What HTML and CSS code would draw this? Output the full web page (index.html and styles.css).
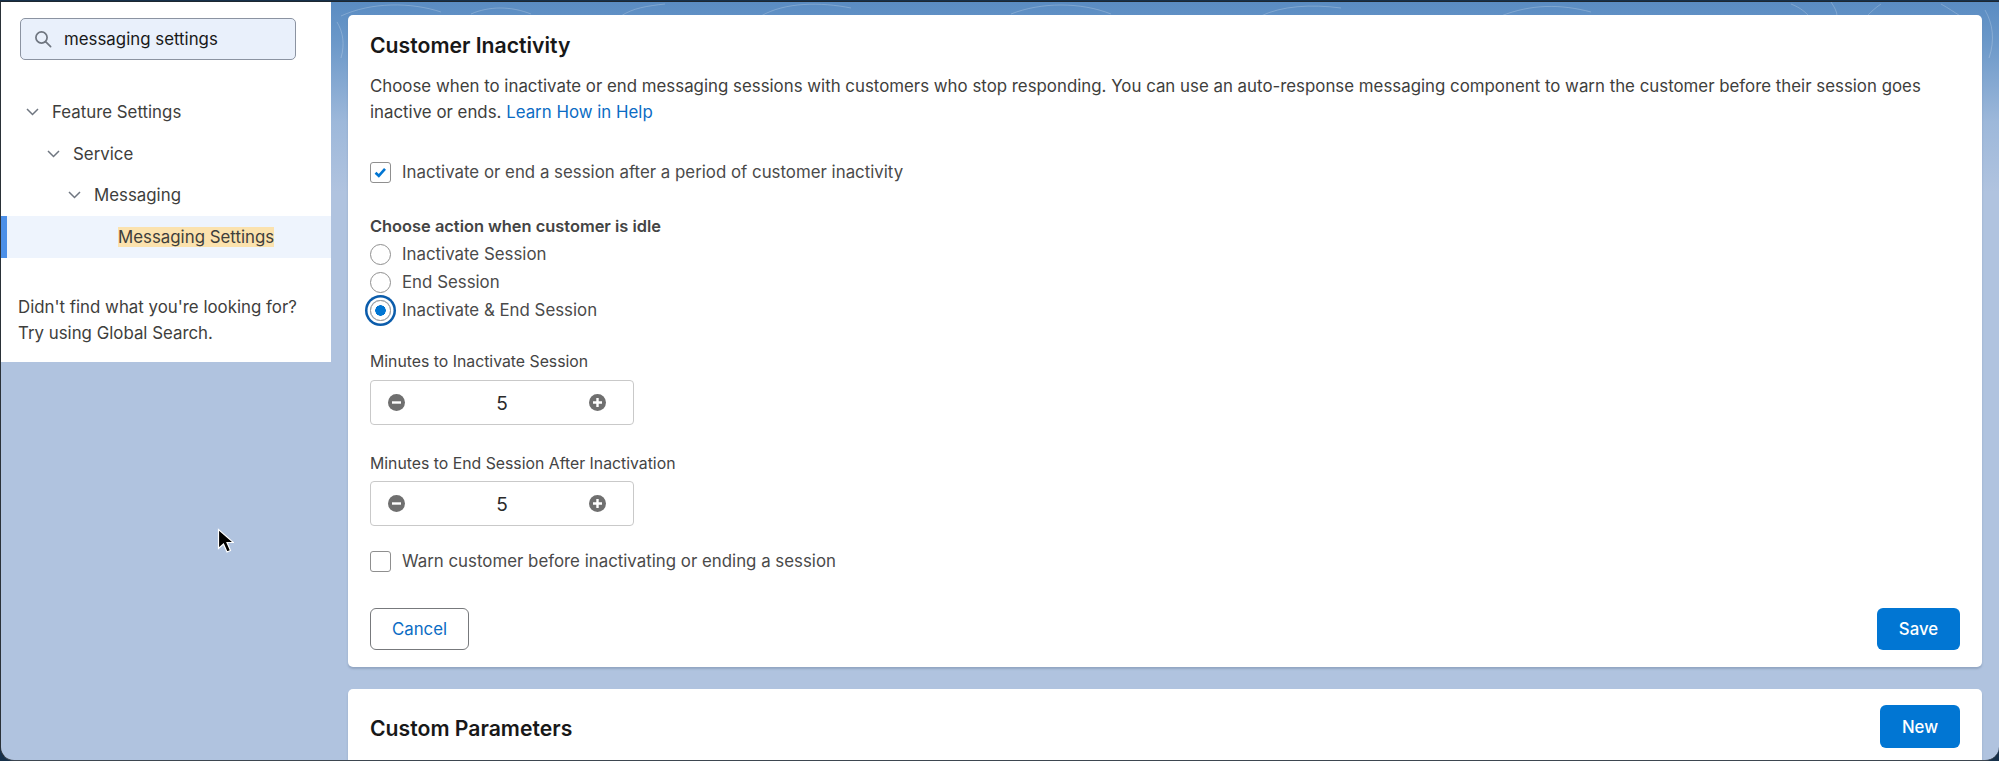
FILE: index.html
```html
<!DOCTYPE html>
<html lang="en">
<head>
  <meta charset="UTF-8">
  <title>Messaging Settings</title>
  <link rel="stylesheet" href="styles.css">
</head>
<body>
  <div class="window">
    <svg class="bg-lines" width="1999" height="60" viewBox="0 0 1999 60" fill="none" stroke="#ffffff" stroke-opacity="0.22">
      <path d="M340 14c30-14 70-14 100-4M470 12c18-8 40-8 60 0M620 14c12-8 26-10 44-12M760 14c24-14 60-14 90-8M1010 12c30-12 70-12 100 0M1260 14c20-10 50-12 80-8M1500 14c30-12 60-12 90-4M1790 2c10 4 14 8 18 12M1830 0c4 6 6 10 6 14M1880 2c-6 4-10 8-14 12M1940 2c18 10 30 22 32 12"/>
      <path d="M1984 8c8 14 10 30 4 48M336 20c6 10 8 22 4 36"/>
    </svg>

    <div class="left-panel">
      <div class="search-box">
        <svg class="search-icon" width="18" height="18" viewBox="0 0 18 18" fill="none" stroke="#6f7680" stroke-width="1.7">
          <circle cx="7.5" cy="7.5" r="5.6"/>
          <path d="M11.6 11.6l5 5" stroke-linecap="round"/>
        </svg>
        <span>messaging settings</span>
      </div>

      <div class="tree">
        <div class="tree-row level-1">
          <svg class="chevron" width="13" height="8" viewBox="0 0 13 8"><path d="M1 1l5.500 5.500L12 1"/></svg>
          Feature Settings
        </div>
        <div class="tree-row level-2">
          <svg class="chevron" width="13" height="8" viewBox="0 0 13 8"><path d="M1 1l5.500 5.500L12 1"/></svg>
          Service
        </div>
        <div class="tree-row level-3">
          <svg class="chevron" width="13" height="8" viewBox="0 0 13 8"><path d="M1 1l5.500 5.500L12 1"/></svg>
          Messaging
        </div>
        <div class="tree-row selected"><mark>Messaging Settings</mark></div>
      </div>

      <p class="not-found">Didn't find what you're looking for?<br>Try using Global Search.</p>
    </div>

    <div class="main">
      <section class="card inactivity-card">
        <h2>Customer Inactivity</h2>
        <p class="intro">Choose when to inactivate or end messaging sessions with customers who stop responding. You can use an auto-response messaging component to warn the customer before their session goes inactive or ends. <a href="#">Learn How in Help</a></p>

        <div class="check-row first-check">
          <span class="checkbox">
            <svg width="13" height="11" viewBox="0 0 13 11" fill="none" stroke="#0176d3" stroke-width="2.600"><path d="M1.500 5.800l3.300 3L11 1.800"/></svg>
          </span>
          Inactivate or end a session after a period of customer inactivity
        </div>

        <div class="group-label">Choose action when customer is idle</div>
        <div class="radio-group">
          <div class="radio-row"><span class="radio"></span>Inactivate Session</div>
          <div class="radio-row"><span class="radio"></span>End Session</div>
          <div class="radio-row"><span class="radio checked"></span>Inactivate &amp; End Session</div>
        </div>

        <label class="field-label first-field">Minutes to Inactivate Session</label>
        <div class="stepper">
          <svg width="17" height="17" viewBox="0 0 17 17"><circle cx="8.500" cy="8.500" r="8.500" fill="#6f6f6f"/><rect x="4" y="7.300" width="9" height="2.400" fill="#fff"/></svg>
          <span>5</span>
          <svg width="17" height="17" viewBox="0 0 17 17"><circle cx="8.500" cy="8.500" r="8.500" fill="#6f6f6f"/><path d="M4 7.300h3.300V4h2.400v3.300H13v2.400H9.700V13H7.300V9.700H4z" fill="#fff"/></svg>
        </div>

        <label class="field-label second-field">Minutes to End Session After Inactivation</label>
        <div class="stepper">
          <svg width="17" height="17" viewBox="0 0 17 17"><circle cx="8.500" cy="8.500" r="8.500" fill="#6f6f6f"/><rect x="4" y="7.300" width="9" height="2.400" fill="#fff"/></svg>
          <span>5</span>
          <svg width="17" height="17" viewBox="0 0 17 17"><circle cx="8.500" cy="8.500" r="8.500" fill="#6f6f6f"/><path d="M4 7.300h3.300V4h2.400v3.300H13v2.400H9.700V13H7.300V9.700H4z" fill="#fff"/></svg>
        </div>

        <div class="check-row last-check">
          <span class="checkbox"></span>
          Warn customer before inactivating or ending a session
        </div>

        <div class="card-actions">
          <button class="btn btn-outline">Cancel</button>
          <button class="btn btn-primary save-btn">Save</button>
        </div>
      </section>

      <section class="card params-card">
        <h2>Custom Parameters</h2>
        <button class="btn btn-primary new-btn">New</button>
      </section>
    </div>

    <svg class="cursor" width="17" height="26" viewBox="0 0 17 26">
      <path d="M1.500 1.500v19l5-4.500 3.500 8 3.500-1.500-3.500-8h6.500z" fill="#000" stroke="#fff" stroke-width="1.200"/>
    </svg>
  </div>
</body>
</html>
```

FILE: styles.css
```css
* {
  box-sizing: border-box;
}

html,
body {
  margin: 0;
  height: 100%;
  background-color: #16304a;
  overflow: hidden;
}

.window {
  position: relative;
  height: 760px;
  margin-top: 1px;
  border-left: 1px solid #2a3138;
  border-top: 1px solid #1d2730;
  border-bottom: 1px solid #3d4650;
  border-radius: 0 0 14px 14px;
  display: flex;
  overflow: hidden;
  background: linear-gradient(180deg, #5a8cc2 0, #6b98c9 40px, #9db8da 120px, #b0c3df 190px);
  font-family: Inter, "Liberation Sans", sans-serif;
  font-size: 16.850px;
  color: #3e3e3c;
}

.bg-lines {
  position: absolute;
  top: 0;
  left: 0;
}

.left-panel {
  position: relative;
  width: 330px;
  height: 360px;
  flex-shrink: 0;
  background-color: #fff;
  padding: 16px 0 0;
}

.search-box {
  display: flex;
  align-items: center;
  gap: 12px;
  width: 276px;
  height: 42px;
  margin-left: 19px;
  padding-left: 13px;
  background-color: #e9f0fb;
  border: 1.500px solid #8b93a1;
  border-radius: 5px;
  color: #181818;
}

.tree {
  margin-top: 31.500px;
}

.tree-row {
  display: flex;
  align-items: center;
  height: 41.500px;
  color: #3e3e3c;
}

.chevron {
  fill: none;
  stroke: #6f7680;
  stroke-width: 1.500;
  margin-right: 13px;
}

.level-1 {
  padding-left: 25px;
}

.level-2 {
  padding-left: 46px;
}

.level-3 {
  padding-left: 67px;
}

.selected {
  padding-left: 111px;
  background-color: #eef4fd;
  border-left: 6px solid #4b8fe8;
}

.selected mark {
  background-color: #fbe2ae;
  color: #3e3e3c;
  padding: 0;
}

.not-found {
  margin: 36px 0 0 17px;
  line-height: 26px;
  color: #3e3e3c;
}

.main {
  flex: 1;
  min-width: 0;
  padding: 13px 17px 0 17px;
}

.card {
  position: relative;
  background-color: #fff;
  border-radius: 5px;
  padding: 0 22px 0 22px;
  box-shadow: 0 2px 2px rgba(110, 130, 160, 0.45);
}

.inactivity-card {
  height: 652px;
  padding-top: 16px;
}

.params-card {
  display: flex;
  justify-content: space-between;
  align-items: center;
  height: 90px;
  margin-top: 22px;
  padding-bottom: 15px;
}

.params-card h2 {
  margin-top: 3px;
}

.card h2 {
  font-size: 21.200px;
  line-height: 28px;
  font-weight: 600;
  color: #181818;
  margin-bottom: 0;
}

.inactivity-card h2 {
  margin-top: 0;
}

.intro {
  margin: 15px 0 0;
  line-height: 25.500px;
}

.intro a {
  color: #0b6cc4;
  text-decoration: none;
}

.check-row {
  display: flex;
  align-items: center;
  gap: 11px;
  height: 22px;
  color: #4a4a4a;
}

.first-check {
  margin-top: 36px;
}

.last-check {
  margin-top: 24px;
}

.checkbox {
  display: flex;
  align-items: center;
  justify-content: center;
  width: 21px;
  height: 21px;
  border: 1.500px solid #8f8f8f;
  border-radius: 3px;
  background-color: #fff;
}

.group-label {
  margin-top: 32.500px;
  font-size: 16.400px;
  line-height: 20px;
  font-weight: 600;
  color: #444;
}

.radio-group {
  margin-top: 4.500px;
}

.radio-row {
  display: flex;
  align-items: center;
  gap: 11px;
  height: 28px;
  color: #4a4a4a;
}

.radio {
  width: 21px;
  height: 21px;
  border: 1.500px solid #8f8f8f;
  border-radius: 50%;
  background-color: #fff;
}

.radio.checked {
  background: radial-gradient(circle, #0176d3 5px, #fff 5.500px);
  box-shadow: 0 0 0 2.500px #fff, 0 0 0 5px #0b5cab;
}

.field-label {
  display: block;
  font-size: 15.800px;
  line-height: 20px;
  color: #444;
}

.first-field {
  margin-top: 28px;
}

.second-field {
  margin-top: 29px;
}

.stepper {
  display: flex;
  align-items: center;
  justify-content: space-between;
  width: 264px;
  height: 45px;
  margin-top: 7.500px;
  padding: 0 27px 0 17px;
  border: 1.500px solid #c9c9c9;
  border-radius: 4px;
  font-size: 19px;
  color: #2a2a2a;
}

.stepper span {
  margin-left: 10px;
  margin-top: 2px;
}

.card-actions {
  display: flex;
  justify-content: space-between;
  margin-top: 36px;
}

.btn {
  height: 42px;
  border-radius: 6px;
  font-family: inherit;
  font-size: 16.800px;
  font-weight: 400;
}

.btn-outline {
  width: 99px;
  background-color: #fff;
  border: 1.500px solid #77797c;
  color: #0b6cc4;
}

.btn-primary {
  background-color: #0176d3;
  border: 0;
  color: #fff;
  font-weight: 500;
}

.save-btn {
  width: 83px;
}

.new-btn {
  width: 80px;
  height: 43px;
}

.cursor {
  position: absolute;
  left: 216px;
  top: 526px;
}
```
